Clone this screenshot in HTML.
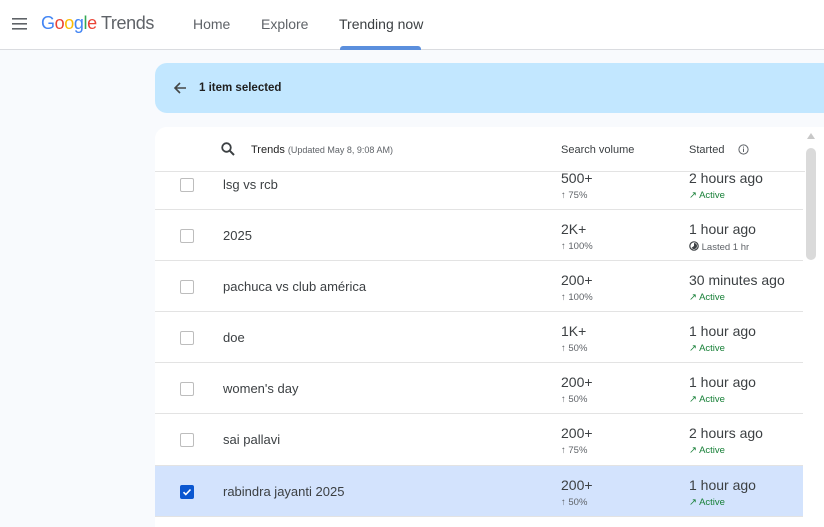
<!DOCTYPE html>
<html><head><meta charset="utf-8"><style>
*{margin:0;padding:0;box-sizing:border-box}
body{width:824px;height:522px;overflow:hidden;background:#f8fafd;font-family:"Liberation Sans",Arial,sans-serif;position:relative;color:#1f1f1f}
.hdr{position:absolute;left:0;top:0;width:824px;height:50px;background:#fff;border-bottom:1px solid #dadce0}
.nav{position:absolute;top:16px;font-size:14px;color:#5f6368}
.banner{position:absolute;left:155px;top:63px;width:680px;height:50px;background:#c2e7ff;border-radius:12px}
.card{position:absolute;left:155px;top:127px;width:669px;height:400px;background:#fff;border-radius:12px 0 0 0;overflow:hidden}
.th{position:absolute;top:0;left:0;width:650px;height:45px;border-bottom:1px solid #e3e3e3;background:#fff;z-index:2}
.row{position:absolute;left:0;width:648px;height:51px;border-bottom:1px solid #e3e3e3}
.cb{position:absolute;left:25px;top:19px;width:14px;height:14px;border:1px solid #bdbdbd;border-radius:2px;background:#fff}
.name{position:absolute;left:68px;top:18px;font-size:13px;color:#3c4043}
.vol{position:absolute;left:406px;top:11px;font-size:14px;color:#3c4043}
.pct{position:absolute;left:406px;top:31px;font-size:9.5px;color:#5f6368}
.st{position:absolute;left:534px;top:11px;font-size:14px;color:#3c4043}
.act{position:absolute;left:534px;top:31px;font-size:9.5px;color:#188038}
.las{position:absolute;left:534px;top:31px;font-size:9.5px;color:#5f6368}
.sel{background:#d3e3fd}
</style></head><body>
<div class="hdr">
<svg style="position:absolute;left:12px;top:18px" width="15" height="12" viewBox="0 0 15 12"><rect y="0" width="15" height="1.6" fill="#5f6368"/><rect y="5" width="15" height="1.6" fill="#5f6368"/><rect y="10" width="15" height="1.6" fill="#5f6368"/></svg>
<div style="position:absolute;left:41px;top:13px;font-size:18px;letter-spacing:-0.4px"><span style="color:#4285f4">G</span><span style="color:#ea4335">o</span><span style="color:#fbbc05">o</span><span style="color:#4285f4">g</span><span style="color:#34a853">l</span><span style="color:#ea4335">e</span><span style="color:#5f6368"> Trends</span></div>
<div class="nav" style="left:193px">Home</div>
<div class="nav" style="left:261px">Explore</div>
<div class="nav" style="left:339px;color:#3c4043">Trending now</div>
<div style="position:absolute;left:340px;top:46px;width:81px;height:4px;background:#5b8fdd;border-radius:3px 3px 0 0"></div>
</div>
<div class="banner">
<svg style="position:absolute;left:18px;top:18px" width="14" height="14" viewBox="0 0 14 14"><path d="M13 7H2M7 2L2 7l5 5" stroke="#444746" stroke-width="1.6" fill="none"/></svg>
<div style="position:absolute;left:44px;top:19px;font-size:11.5px;font-weight:bold;color:#1f1f1f">1 item selected</div>
</div>
<div class="card">
<div class="row" style="top:32px"><div class="cb"></div><div class="name">lsg vs rcb</div><div class="vol">500+</div><div class="pct">↑ 75%</div><div class="st">2 hours ago</div><div class="act">↗ Active</div></div>
<div class="th">
<svg style="position:absolute;left:66px;top:15px" width="14" height="14" viewBox="0 0 14 14"><circle cx="5.5" cy="5.5" r="4.3" stroke="#3c4043" stroke-width="1.8" fill="none"/><path d="M8.6 8.6L13 13" stroke="#3c4043" stroke-width="2"/></svg>
<div style="position:absolute;left:96px;top:17px;font-size:11px;color:#1f1f1f">Trends <span style="font-size:9px;color:#5f6368">(Updated May 8, 9:08 AM)</span></div>
<div style="position:absolute;left:406px;top:17px;font-size:11px;color:#3c4043">Search volume</div>
<div style="position:absolute;left:534px;top:17px;font-size:11px;color:#3c4043">Started</div>
<svg style="position:absolute;left:583px;top:17px" width="11" height="11" viewBox="0 0 11 11"><circle cx="5.5" cy="5.5" r="4.6" stroke="#5f6368" stroke-width="1" fill="none"/><rect x="5" y="4.5" width="1" height="3.5" fill="#5f6368"/><rect x="5" y="2.6" width="1" height="1" fill="#5f6368"/></svg>
</div>
<div class="row" style="top:83px"><div class="cb"></div><div class="name">2025</div><div class="vol">2K+</div><div class="pct">↑ 100%</div><div class="st">1 hour ago</div><div class="las"><svg width="10" height="10" viewBox="0 0 10 10" style="vertical-align:-1px"><circle cx="5" cy="5" r="4.2" stroke="#3c4043" stroke-width="1.2" fill="none"/><path d="M5 5V2A3 3 0 1 1 2.6 6.8Z" fill="#3c4043"/></svg> Lasted 1 hr</div></div>
<div class="row" style="top:134px"><div class="cb"></div><div class="name">pachuca vs club américa</div><div class="vol">200+</div><div class="pct">↑ 100%</div><div class="st">30 minutes ago</div><div class="act">↗ Active</div></div>
<div class="row" style="top:185px"><div class="cb"></div><div class="name">doe</div><div class="vol">1K+</div><div class="pct">↑ 50%</div><div class="st">1 hour ago</div><div class="act">↗ Active</div></div>
<div class="row" style="top:236px"><div class="cb"></div><div class="name">women's day</div><div class="vol">200+</div><div class="pct">↑ 50%</div><div class="st">1 hour ago</div><div class="act">↗ Active</div></div>
<div class="row" style="top:287px;height:52px"><div class="cb"></div><div class="name">sai pallavi</div><div class="vol">200+</div><div class="pct">↑ 75%</div><div class="st">2 hours ago</div><div class="act">↗ Active</div></div>
<div class="row sel" style="top:339px"><div class="cb" style="background:#0b57d0;border-color:#0b57d0"><svg width="12" height="12" viewBox="0 0 12 12" style="position:absolute;left:0;top:0"><path d="M2.5 6.2l2.3 2.3 4.7-5" stroke="#fff" stroke-width="1.6" fill="none"/></svg></div><div class="name">rabindra jayanti 2025</div><div class="vol">200+</div><div class="pct">↑ 50%</div><div class="st">1 hour ago</div><div class="act">↗ Active</div></div>
<div style="position:absolute;left:651px;top:21px;width:10px;height:112px;background:#dadada;border-radius:5px"></div>
<div style="position:absolute;left:652px;top:6px;width:0;height:0;border-left:4px solid transparent;border-right:4px solid transparent;border-bottom:6px solid #c8c8c8"></div>
</div>
</body></html>
